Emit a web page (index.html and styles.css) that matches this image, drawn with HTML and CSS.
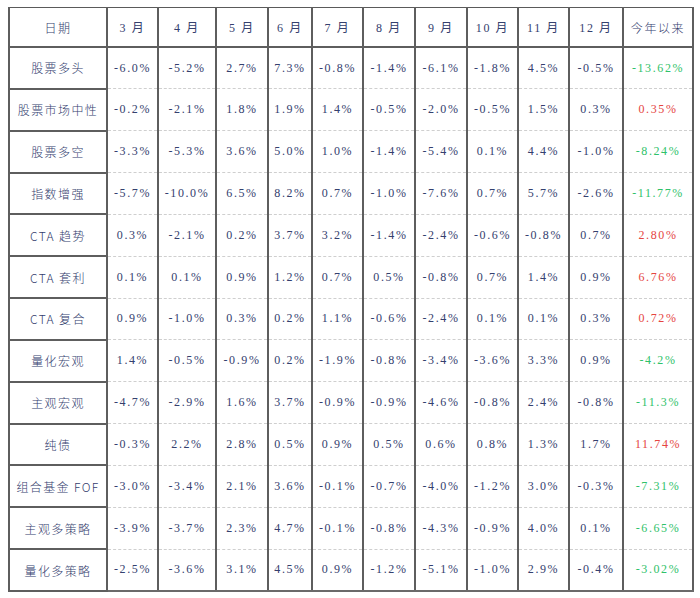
FILE: index.html
```html
<!DOCTYPE html>
<html>
<head>
<meta charset="utf-8">
<link rel="stylesheet" href="styles.css">
</head>
<body>
<table class="perf">
<colgroup>
<col class="c-name"><col class="c-m1"><col class="c-m2"><col class="c-m3"><col class="c-m4"><col class="c-m5"><col class="c-m6"><col class="c-m7"><col class="c-m8"><col class="c-m9"><col class="c-m10"><col class="c-ytd">
</colgroup>
<thead>
<tr><th>日期</th><th>3 月</th><th>4 月</th><th>5 月</th><th>6 月</th><th>7 月</th><th>8 月</th><th>9 月</th><th>10 月</th><th>11 月</th><th>12 月</th><th>今年以来</th></tr>
</thead>
<tbody>
<tr><th>股票多头</th><td>-6.0%</td><td>-5.2%</td><td>2.7%</td><td>7.3%</td><td>-0.8%</td><td>-1.4%</td><td>-6.1%</td><td>-1.8%</td><td>4.5%</td><td>-0.5%</td><td class="neg">-13.62%</td></tr>
<tr><th>股票市场中性</th><td>-0.2%</td><td>-2.1%</td><td>1.8%</td><td>1.9%</td><td>1.4%</td><td>-0.5%</td><td>-2.0%</td><td>-0.5%</td><td>1.5%</td><td>0.3%</td><td class="pos">0.35%</td></tr>
<tr><th>股票多空</th><td>-3.3%</td><td>-5.3%</td><td>3.6%</td><td>5.0%</td><td>1.0%</td><td>-1.4%</td><td>-5.4%</td><td>0.1%</td><td>4.4%</td><td>-1.0%</td><td class="neg">-8.24%</td></tr>
<tr><th>指数增强</th><td>-5.7%</td><td>-10.0%</td><td>6.5%</td><td>8.2%</td><td>0.7%</td><td>-1.0%</td><td>-7.6%</td><td>0.7%</td><td>5.7%</td><td>-2.6%</td><td class="neg">-11.77%</td></tr>
<tr><th>CTA 趋势</th><td>0.3%</td><td>-2.1%</td><td>0.2%</td><td>3.7%</td><td>3.2%</td><td>-1.4%</td><td>-2.4%</td><td>-0.6%</td><td>-0.8%</td><td>0.7%</td><td class="pos">2.80%</td></tr>
<tr><th>CTA 套利</th><td>0.1%</td><td>0.1%</td><td>0.9%</td><td>1.2%</td><td>0.7%</td><td>0.5%</td><td>-0.8%</td><td>0.7%</td><td>1.4%</td><td>0.9%</td><td class="pos">6.76%</td></tr>
<tr><th>CTA 复合</th><td>0.9%</td><td>-1.0%</td><td>0.3%</td><td>0.2%</td><td>1.1%</td><td>-0.6%</td><td>-2.4%</td><td>0.1%</td><td>0.1%</td><td>0.3%</td><td class="pos">0.72%</td></tr>
<tr><th>量化宏观</th><td>1.4%</td><td>-0.5%</td><td>-0.9%</td><td>0.2%</td><td>-1.9%</td><td>-0.8%</td><td>-3.4%</td><td>-3.6%</td><td>3.3%</td><td>0.9%</td><td class="neg">-4.2%</td></tr>
<tr><th>主观宏观</th><td>-4.7%</td><td>-2.9%</td><td>1.6%</td><td>3.7%</td><td>-0.9%</td><td>-0.9%</td><td>-4.6%</td><td>-0.8%</td><td>2.4%</td><td>-0.8%</td><td class="neg">-11.3%</td></tr>
<tr><th>纯债</th><td>-0.3%</td><td>2.2%</td><td>2.8%</td><td>0.5%</td><td>0.9%</td><td>0.5%</td><td>0.6%</td><td>0.8%</td><td>1.3%</td><td>1.7%</td><td class="pos">11.74%</td></tr>
<tr><th>组合基金 FOF</th><td>-3.0%</td><td>-3.4%</td><td>2.1%</td><td>3.6%</td><td>-0.1%</td><td>-0.7%</td><td>-4.0%</td><td>-1.2%</td><td>3.0%</td><td>-0.3%</td><td class="neg">-7.31%</td></tr>
<tr><th>主观多策略</th><td>-3.9%</td><td>-3.7%</td><td>2.3%</td><td>4.7%</td><td>-0.1%</td><td>-0.8%</td><td>-4.3%</td><td>-0.9%</td><td>4.0%</td><td>0.1%</td><td class="neg">-6.65%</td></tr>
<tr><th>量化多策略</th><td>-2.5%</td><td>-3.6%</td><td>3.1%</td><td>4.5%</td><td>0.9%</td><td>-1.2%</td><td>-5.1%</td><td>-1.0%</td><td>2.9%</td><td>-0.4%</td><td class="neg">-3.02%</td></tr>
</tbody>
</table>
</body>
</html>
```
FILE: styles.css
```css
html, body {
  margin: 0;
  padding: 0;
  background: #ffffff;
}
body {
  padding: 7px 0 0 8px;
}
.perf {
  border-collapse: collapse;
  table-layout: fixed;
  width: 684px;
  height: 585px;
  font-family: "Liberation Serif", "Noto Sans CJK SC", serif;
  font-size: 12px;
  color: #34406e;
  letter-spacing: 1.6px;
  border-top: 1px solid #5a5a5a;
  border-left: 1px solid #5a5a5a;
  border-right: 2px solid #6a6a6a;
  border-bottom: 2px solid #6a6a6a;
}
.c-name { width: 98px; }
.c-m1 { width: 51px; }
.c-m2 { width: 58px; }
.c-m3 { width: 52px; }
.c-m4 { width: 44px; }
.c-m5 { width: 51px; }
.c-m6 { width: 52px; }
.c-m7 { width: 52px; }
.c-m8 { width: 51px; }
.c-m9 { width: 51px; }
.c-m10 { width: 54px; }
.c-ytd { width: 70px; }
.perf th, .perf td {
  height: 38px;
  padding: 0;
  text-align: center;
  vertical-align: middle;
  font-weight: normal;
  white-space: nowrap;
  overflow: hidden;
  border-left: 2px solid #5e5e5e;
  border-right: 2px solid #5e5e5e;
}
.perf thead th {
  border-bottom: 2px solid #5e5e5e;
  font-family: "Liberation Serif", "Noto Sans CJK SC", serif;
}
.perf thead th:first-child,
.perf thead th:last-child {
  font-family: "Noto Sans CJK SC", sans-serif;
  font-weight: 300;
}
.perf tbody th {
  border-top: 2px solid #5e5e5e;
  border-bottom: 2px solid #5e5e5e;
  font-family: "Noto Sans CJK SC", sans-serif;
  font-weight: 300;
  letter-spacing: 1.4px;
}
.perf tbody td {
  border-bottom: 1px dashed #cfcfcf;
}
.perf tbody tr:last-child td {
  border-bottom: 2px solid #6a6a6a;
}
.perf td.neg { color: #2fc26a; }
.perf td.pos { color: #e5453f; }
```
